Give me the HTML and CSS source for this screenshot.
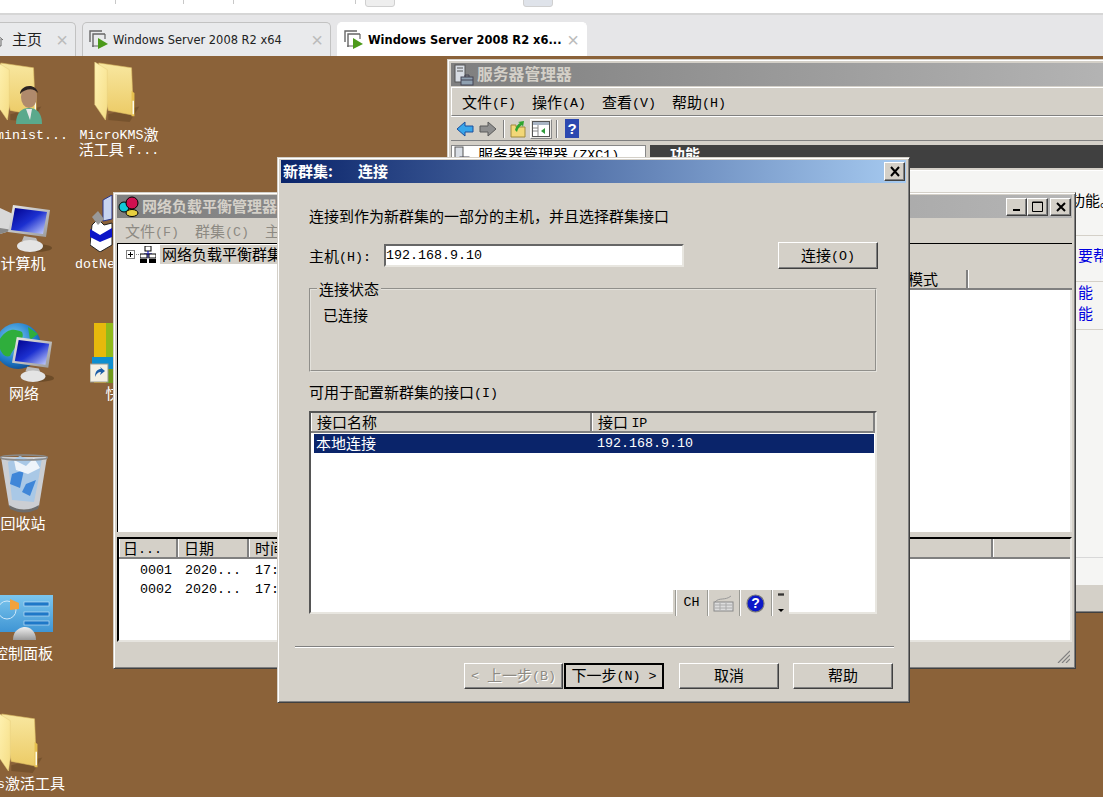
FILE: index.html
```html
<!DOCTYPE html>
<html lang="zh">
<head>
<meta charset="utf-8">
<title>Windows Server 2008 R2 x64</title>
<link rel="stylesheet" href="styles.css">
</head>
<body>
<svg class="defs" aria-hidden="true">
  <defs>
    <linearGradient id="gBack" x1="0" y1="0" x2="0" y2="1"><stop offset="0" stop-color="#f8e7a0"/><stop offset="1" stop-color="#eccb66"/></linearGradient>
    <linearGradient id="gLeaf" x1="0" y1="0" x2="1" y2="1"><stop offset="0" stop-color="#fff3b4"/><stop offset="1" stop-color="#f5dd85"/></linearGradient>
    <linearGradient id="gScreen" x1="0" y1="0" x2="1" y2="1"><stop offset="0" stop-color="#00008c"/><stop offset=".5" stop-color="#1c30d0"/><stop offset="1" stop-color="#cfd8ff"/></linearGradient>
    <linearGradient id="gFrame" x1="0" y1="0" x2="1" y2="1"><stop offset="0" stop-color="#e8e8e8"/><stop offset="1" stop-color="#9a9a9a"/></linearGradient>
    <radialGradient id="gGlobe" cx=".4" cy=".35" r=".7"><stop offset="0" stop-color="#7fd0f5"/><stop offset=".7" stop-color="#1d78c8"/><stop offset="1" stop-color="#0f4a8c"/></radialGradient>
    <linearGradient id="gPanel" x1="0" y1="0" x2="0" y2="1"><stop offset="0" stop-color="#7cc6ee"/><stop offset="1" stop-color="#3f95d4"/></linearGradient>
    <linearGradient id="gDome" x1="0" y1="0" x2="0" y2="1"><stop offset="0" stop-color="#f0f0f0"/><stop offset="1" stop-color="#9a9a9a"/></linearGradient>
    <symbol id="folder" viewBox="0 0 48 62">
      <path d="M14 54 L46 46 L36 62 L14 60z" fill="#5f4222" opacity=".45"/>
      <path d="M4 1 L38 6 L40 55 L14 50z" fill="url(#gBack)" stroke="#d8b860" stroke-width=".6"/>
      <path d="M38 30 L41 32 L41 56 L38 56z" fill="#e6c04f"/>
      <path d="M39 40 L40.5 40 L40.5 54 L39 54z" fill="#fffdf0"/>
      <path d="M0 0 L13 8 L13 46 L11 60 L0 44z" fill="url(#gLeaf)" stroke="#e6cd7c" stroke-width=".5"/>
    </symbol>
    <symbol id="monitor" viewBox="0 0 44 48">
      <ellipse cx="28" cy="43" rx="16" ry="4" fill="#4f3518" opacity=".5"/>
      <path d="M5 0 L42 5 L38 32 L0 27z" fill="url(#gFrame)"/>
      <path d="M7 3 L39 7 L35 29 L3 25z" fill="url(#gScreen)"/>
      <path d="M16 31 L28 33 L30 37 L14 36z" fill="#bdbdbd"/>
      <ellipse cx="22" cy="41" rx="13" ry="6" fill="#e4e4e4"/>
    </symbol>
  </defs>
</svg>

<div class="app">
  <div class="topbar">
    <span class="tb-sep tb-a"></span><span class="tb-sep tb-b"></span><span class="tb-sep tb-c"></span>
    <span class="tb-btn tb-d"></span><span class="tb-sep tb-e"></span><span class="tb-btn tb-f"></span>
  </div>
  <div class="tabbar">
    <div class="tab tab-home">
      <svg class="home-ico" width="10" height="14" viewBox="0 0 10 14"><path d="M-6 7 L1 1 L8 7 M0 6 V13 H6 V6" fill="none" stroke="#666" stroke-width="1"/></svg>
      <span class="tab-title cjk">主页</span><span class="tab-x">×</span>
    </div>
    <div class="tab tab-vm">
      <svg class="vm-ico" width="20" height="20" viewBox="0 0 20 20"><path d="M1 12 V1 H13 M4 17 V4 H16" fill="none" stroke="#666" stroke-width="1.4"/><path d="M3 16 H9 M16 4 V9" fill="none" stroke="#666" stroke-width="1.2"/><path d="M9 8 L19 14 L9 19z" fill="#4c9a1a"/></svg>
      <span class="tab-title">Windows Server 2008 R2 x64</span><span class="tab-x">×</span>
    </div>
    <div class="tab tab-vm active">
      <svg class="vm-ico" width="20" height="20" viewBox="0 0 20 20"><path d="M1 12 V1 H13 M4 17 V4 H16" fill="none" stroke="#666" stroke-width="1.4"/><path d="M3 16 H9 M16 4 V9" fill="none" stroke="#666" stroke-width="1.2"/><path d="M9 8 L19 14 L9 19z" fill="#4c9a1a"/></svg>
      <span class="tab-title">Windows Server 2008 R2 x6...</span><span class="tab-x">×</span>
    </div>
  </div>

  <main class="desktop">
    <!-- desktop icons -->
    <svg class="d-ico i-admin-f" width="48" height="60"><use href="#folder"/></svg>
    <svg class="d-ico i-admin-u" width="30" height="42" viewBox="0 0 30 42"><path d="M2 42 C2 30 8 26 15 26 C22 26 28 30 28 42z" fill="#5aa98c"/><path d="M12 27 L18 27 L16 38z" fill="#e8e8e8"/><ellipse cx="15" cy="15" rx="8" ry="11" fill="#b08a6c"/><path d="M6 12 C6 3 22 0 24 11 C20 6 12 6 6 12z" fill="#2b2320"/></svg>
    <span class="d-label l-admin"><span class="m">Administ...</span></span>
    <svg class="d-ico i-kms" width="48" height="60"><use href="#folder"/></svg>
    <span class="d-label l-kms"><span class="m">MicroKMS</span>激<br>活工具 <span class="m">f...</span></span>

    <svg class="d-ico i-pc-t" width="14" height="30" viewBox="0 0 14 30"><path d="M0 2 L13 8 V24 L0 28z" fill="#d8d8d8"/><path d="M0 22 L13 24 L0 28z" fill="#888"/></svg>
    <svg class="d-ico i-pc" width="44" height="48"><use href="#monitor"/></svg>
    <span class="d-label l-pc">计算机</span>
    <svg class="d-ico i-net" width="24" height="57" viewBox="0 0 24 57"><path d="M2 30 L8 24 L14 30 L22 28 V50 L10 57 L0 50z" fill="#fff" stroke="#222"/><path d="M0 34 L10 40 L22 33 V42 L10 47 L0 42z" fill="#0a14c8"/><path d="M13 5 L22 0 V24 L13 26z" fill="#c8d4f0" stroke="#27358c"/><path d="M2 22 L8 16 L14 24 L8 30z" fill="#999"/></svg>
    <span class="d-label l-net"><span class="m">dotNet...</span></span>

    <svg class="d-ico i-globe" width="44" height="48" viewBox="0 0 44 48"><circle cx="18" cy="24" r="23" fill="url(#gGlobe)"/><path d="M-2 20 C6 6 14 6 22 10 C26 18 14 24 10 34 C4 36 0 30 -2 20z" fill="#2fae3c"/><path d="M28 5 L38 12 L30 18z" fill="#2fae3c"/></svg>
    <svg class="d-ico i-netmon" width="42" height="46"><use href="#monitor"/></svg>
    <span class="d-label l-globe">网络</span>
    <svg class="d-ico i-books" width="24" height="62" viewBox="0 0 24 62"><rect x="4" width="12" height="36" fill="#e6b90c"/><rect x="16" width="8" height="36" fill="#8fba1a"/><rect y="34" x="2" width="22" height="12" fill="#0e8ed0"/><rect y="46" x="4" width="12" height="14" fill="#d6a018"/><rect y="46" x="16" width="8" height="14" fill="#6f9a1a"/><rect x="0" y="41" width="18" height="18" fill="#f4f0e4" stroke="#9a9a90"/><path d="M5 54 C5 48 8 46 11 46 L10 44 L15 48 L10 52 L11 49 C8 49 6 51 5 54z" fill="#1c5ea8"/></svg>
    <span class="d-label l-books">快</span>

    <svg class="d-ico i-bin" width="48" height="60" viewBox="0 0 48 60"><path d="M1 3 L47 3 L39 52 Q24 60 9 52z" fill="#d6e2ee" opacity=".85"/><path d="M8 8 L20 2 L30 6 L42 4 L38 28 L34 48 L12 46z" fill="#a9c8e6"/><path d="M12 20 L24 16 L20 34 L10 30z" fill="#3f86d8"/><path d="M26 30 L36 26 L30 42 L22 38z" fill="#3f86d8"/><path d="M14 6 L26 12 L34 4 L40 14 L28 20 L16 16z" fill="#eef4fa"/><ellipse cx="24" cy="3.500" rx="23.500" ry="2.500" fill="none" stroke="#8a8a8a" stroke-width="1.500"/><path d="M9 51 Q24 60 39 51 L38 55 Q24 62 10 55z" fill="#6c6c6c"/></svg>
    <span class="d-label l-bin">回收站</span>

    <svg class="d-ico i-cp" width="54" height="46" viewBox="0 0 54 46"><rect x="-2" width="55" height="37" fill="url(#gPanel)"/><circle cx="7" cy="15" r="9" fill="none" stroke="#cfe8f8" stroke-width="1"/><path d="M10 4 L19 8 L19 14 L10 15z" fill="#f2a23c"/><rect x="24" y="7" width="25" height="4" fill="#1e78c8" stroke="#cfe8f8" stroke-width=".6"/><rect x="24" y="17" width="25" height="4" fill="#1e78c8" stroke="#cfe8f8" stroke-width=".6"/><rect x="24" y="26" width="25" height="4" fill="#1e78c8" stroke="#cfe8f8" stroke-width=".6"/><path d="M13 45 C13 34 22 32 25 32 C30 32 36 36 36 45z" fill="url(#gDome)"/></svg>
    <span class="d-label l-cp">控制面板</span>

    <svg class="d-ico i-kt" width="48" height="60"><use href="#folder"/></svg>
    <span class="d-label l-kt"><span class="m">Kms</span>激活工具</span>

    <!-- Server Manager window -->
    <section class="win win-server">
      <header class="title title-gray"><svg class="sm-ico" width="20" height="22" viewBox="0 0 20 22"><rect x="1" y="1" width="10" height="17" fill="#d8dde4" stroke="#555"/><path d="M3 4 H9 M3 7 H9" stroke="#555"/><rect x="7" y="13" width="12" height="8" fill="#8fa0b0" stroke="#445"/><path d="M11 13 V11 H15 V13 M7 16 H19" fill="none" stroke="#445"/></svg><span class="title-text title-srv">服务器管理器</span></header>
      <nav class="menu menu-server">
        <span class="mi">文件<span class="m">(F)</span></span><span class="mi">操作<span class="m">(A)</span></span><span class="mi">查看<span class="m">(V)</span></span><span class="mi">帮助<span class="m">(H)</span></span>
      </nav>
      <div class="toolbar">
        <svg width="18" height="16" viewBox="0 0 18 16"><path d="M1 8 L9 1 V5 H17 V11 H9 V15z" fill="#39a6ea" stroke="#1c4f9c"/></svg>
        <svg class="t-fwd" width="18" height="16" viewBox="0 0 18 16"><path d="M17 8 L9 1 V5 H1 V11 H9 V15z" fill="#8f8f8f" stroke="#5a5a5a"/></svg>
        <span class="t-sep"></span>
        <svg class="t-up" width="16" height="18" viewBox="0 0 16 18"><path d="M1 5 H6 V7 H15 V17 H1z" fill="#f2d776" stroke="#a08a3c"/><path d="M5 10 C6 6 8 4 10 3 L8 2 L14 1 L13 7 L12 5 C10 6 8 8 7 12z" fill="#2ea52e"/></svg>
        <span class="t-on"><svg width="18" height="16" viewBox="0 0 18 16"><rect x=".5" y=".5" width="17" height="15" fill="#fff" stroke="#555"/><rect x="1" y="1" width="16" height="3" fill="#a8b4c4"/><path d="M6 4 V15 M1 7 H6 M1 10 H6" stroke="#888"/><path d="M13 7 L9 10 L13 13z" fill="#2e9a3a"/></svg></span>
        <span class="t-sep"></span>
        <svg class="t-help" width="14" height="19" viewBox="0 0 14 19"><rect width="14" height="19" fill="#2c48b0"/><text x="7" y="15" class="t-q">?</text></svg>
      </div>
      <div class="srv-main">
        <div class="srv-tree"><svg width="16" height="18" viewBox="0 0 16 18"><rect x="1" y="1" width="8" height="14" fill="#d8dde4" stroke="#555"/><rect x="6" y="11" width="9" height="6" fill="#8fa0b0" stroke="#445"/></svg><span class="srv-tree-t">服务器管理器 <span class="m">(ZXC1)</span></span></div>
        <div class="srv-right">
          <div class="srv-head">功能</div>
          <div class="srv-body">
            <div class="srv-row r1">功能。</div>
            <div class="srv-row r2 link">要帮助</div>
            <div class="srv-row r3 link"><div>能</div><div>能</div></div>
            <div class="srv-fill"></div>
            <div class="srv-foot"></div>
          </div>
        </div>
      </div>
    </section>

    <!-- NLB manager window -->
    <section class="win win-nlb">
      <header class="title title-nlb">
        <svg class="nlb-ico" width="22" height="22" viewBox="0 0 22 22"><circle cx="6" cy="11" r="5" fill="#12c8d8" stroke="#000"/><circle cx="14" cy="7" r="6" fill="#d01050" stroke="#000"/><ellipse cx="14" cy="17" rx="6" ry="3.500" fill="#e8d040" stroke="#000"/></svg>
        <span class="title-text">网络负载平衡管理器</span>
        <div class="win-btns">
          <button class="wb" aria-label="最小化"><svg width="10" height="10" viewBox="0 0 10 10"><rect x="1" y="7" width="7" height="2"/></svg></button>
          <button class="wb" aria-label="最大化"><svg width="11" height="11" viewBox="0 0 11 11"><path d="M.5 1 H10.500 V10.500 H.5z M.5 1.500 H10.500" fill="none" stroke="#000"/></svg></button>
          <button class="wb wb-x" aria-label="关闭"><svg width="10" height="10" viewBox="0 0 10 10"><path d="M1 1 L9 9 M9 1 L1 9" stroke="#000" stroke-width="2"/></svg></button>
        </div>
      </header>
      <nav class="menu menu-nlb">
        <span class="mi">文件<span class="m">(F)</span></span><span class="mi">群集<span class="m">(C)</span></span><span class="mi">主机<span class="m">(O)</span></span>
      </nav>
      <div class="nlb-top">
        <div class="nlb-tree">
          <div class="tree-row">
            <svg class="tree-exp" width="22" height="9" viewBox="0 0 22 9"><rect x=".5" y=".5" width="8" height="8" fill="#fff" stroke="#808080"/><path d="M2 4.500 H7 M4.500 2 V7" stroke="#000"/><path d="M10 4.500 H20" stroke="#888" stroke-dasharray="1 1"/></svg>
            <svg class="tree-net" width="16" height="17" viewBox="0 0 16 17"><rect x="5" y="0" width="6" height="5" fill="#fff" stroke="#000"/><path d="M8 5 V12 M4 8 H12" stroke="#00c"/><rect x="0" y="8" width="7" height="4" fill="#fff" stroke="#000"/><rect x="9" y="8" width="7" height="4" fill="#fff" stroke="#000"/><rect x="0" y="13" width="7" height="4" fill="#000"/><rect x="9" y="13" width="7" height="4" fill="#000"/></svg>
            <span class="tree-sel">网络负载平衡群集</span>
          </div>
        </div>
        <div class="nlb-right">
          <div class="nlb-band"></div>
          <div class="lv-head nlb-head"><span class="lv-c c-main">模式</span><span class="lv-c c-end"></span></div>
          <div class="nlb-white"></div>
        </div>
      </div>
      <div class="nlb-log">
        <div class="lv-head log-head">
          <span class="lv-c c-a">日<span class="m">...</span></span><span class="lv-c c-b">日期</span><span class="lv-c c-c">时间</span><span class="lv-c c-d"></span><span class="lv-c c-e"></span>
        </div>
        <div class="log-row"><span class="m c-a-t">0001</span><span class="m c-b-t">2020...</span><span class="m">17:</span></div>
        <div class="log-row"><span class="m c-a-t">0002</span><span class="m c-b-t">2020...</span><span class="m">17:</span></div>
      </div>
      <footer class="status"><svg class="grip" width="13" height="13" viewBox="0 0 13 13"><path d="M13 1 L1 13 M13 5 L5 13 M13 9 L9 13" stroke="#808080" stroke-width="1.200"/></svg></footer>
    </section>

    <!-- New cluster dialog -->
    <section class="win win-dlg">
      <header class="title title-blue">
        <span class="title-text dlg-title">新群集:</span><span class="title-text dlg-sub">连接</span>
        <button class="wb wb-close" aria-label="关闭"><svg width="12" height="11" viewBox="0 0 12 11"><path d="M2 1 L10 10 M10 1 L2 10" stroke="#000" stroke-width="2"/></svg></button>
      </header>
      <div class="dlg-body">
        <p class="intro">连接到作为新群集的一部分的主机，并且选择群集接口</p>
        <div class="host-row">
          <label class="host-label">主机<span class="m">(H):</span></label>
          <div class="input"><span class="m">192.168.9.10</span></div>
          <button class="btn btn-conn">连接<span class="m">(O)</span></button>
        </div>
        <fieldset class="group">
          <legend>连接状态</legend>
          <div class="group-text">已连接</div>
        </fieldset>
        <div class="list-label">可用于配置新群集的接口<span class="m">(I)</span></div>
        <div class="iface">
          <div class="lv-head if-head"><span class="lv-c if-a">接口名称</span><span class="lv-c if-b">接口 <span class="m">IP</span></span></div>
          <div class="if-row"><span class="if-name">本地连接</span><span class="m">192.168.9.10</span></div>
        </div>
        <hr class="sep">
        <div class="actions">
          <button class="btn btn-off"><span class="m">&lt; </span>上一步<span class="m">(B)</span></button>
          <button class="btn btn-def">下一步<span class="m">(N) &gt;</span></button>
          <button class="btn btn-cancel">取消</button>
          <button class="btn btn-help">帮助</button>
        </div>
      </div>
      <aside class="langbar">
        <span class="lb-cell lb-ch"><span class="m">CH</span></span>
        <span class="lb-cell lb-kb"><svg width="21" height="17" viewBox="0 0 21 17"><path d="M2 7 C6 2 12 6 18 1" fill="none" stroke="#999"/><rect x="1" y="7" width="19" height="9" fill="#ddd" stroke="#888"/><path d="M2 10 H19 M2 13 H19 M7 8 V15 M13 8 V15" stroke="#aaa"/></svg></span>
        <span class="lb-cell lb-q"><svg width="19" height="19" viewBox="0 0 19 19"><circle cx="9.500" cy="9.500" r="8.500" fill="#0c18c8" stroke="#7a7a7a" stroke-width="1.200"/><text x="9.500" y="14" class="lb-qt">?</text></svg></span>
        <span class="lb-cell lb-more"><svg width="8" height="22" viewBox="0 0 8 22"><path d="M1 2 H7 M1 3 H7" stroke="#000"/><path d="M1 17 L7 17 L4 20z" fill="#000"/></svg></span>
      </aside>
    </section>
  </main>
</div>
</body>
</html>
```
FILE: styles.css
```css
* { box-sizing: border-box; }
html, body { margin: 0; height: 100%; overflow: hidden; }
body { font-family: "Noto Sans CJK SC", "Liberation Sans", sans-serif; font-size: 15px; line-height: 20px; color: #000; }
.defs { width: 0; height: 0; position: absolute; }
.m { font-family: "Liberation Mono", monospace; font-size: 13.33px; line-height: 0; vertical-align: 1px; }
.app { display: flex; flex-direction: column; width: 1103px; height: 797px; }

/* top chrome */
.topbar { position: relative; height: 15px; flex: none; background: #fff; border-bottom: 2px solid #d6d6d6; }
.tb-sep { position: absolute; top: 0; width: 1px; height: 4px; background: #c8c8c8; }
.tb-a { left: 115px; } .tb-b { left: 183px; } .tb-c { left: 233px; } .tb-e { left: 355px; }
.tb-btn { position: absolute; top: -4px; width: 30px; height: 11px; background: #eeeeee; border: 1px solid #d0d0d0; border-radius: 3px; }
.tb-d { left: 365px; } .tb-f { left: 523px; background: #dfe3ea; }
.tabbar { height: 41px; flex: none; display: flex; align-items: flex-end; gap: 6px; padding-left: 0; background: #e6e6e8; margin-left: -6px; width: 1109px; }
.tab { display: flex; align-items: center; height: 34px; background: #e9eaec; border: 1px solid #c2c2c2; border-bottom: 0; border-radius: 5px 5px 0 0; position: relative; padding-left: 6px; font-family: "DejaVu Sans", sans-serif; font-size: 11.45px; color: #222; }
.tab-home { width: 82px; padding-left: 0; }
.tab-vm { width: 249px; }
.tab.active { width: 250px; background: #fff; border-color: #fff; font-weight: 700; color: #000; font-size: 11.45px; margin-left: 0; }
.home-ico { flex: none; margin-right: 7px; }
.vm-ico { flex: none; margin-right: 4px; }
.tab-title { white-space: nowrap; flex: 1; }
.cjk { font-family: "Noto Sans CJK SC", sans-serif; font-size: 15px; margin-top: -1px; }
.tab-x { font-family: "Liberation Sans", sans-serif; font-size: 20px; color: #bbbbbb; font-weight: 400; margin-right: 7px; flex: none; }

/* desktop */
.desktop { position: relative; flex: 1; background: #8b6239; overflow: hidden; }
.d-ico { position: absolute; }
.d-label { position: absolute; width: 110px; text-align: center; color: #fff; font-size: 15px; line-height: 15px; white-space: nowrap; }
.i-admin-f { left: -4px; top: 6px; }
.i-admin-u { left: 14px; top: 26px; }
.l-admin { left: -31px; top: 70px; }
.i-kms { left: 94px; top: 6px; }
.l-kms { left: 64px; top: 70px; }
.i-pc-t { left: 0; top: 150px; }
.i-pc { left: 8px; top: 149px; }
.l-pc { left: -32px; top: 199px; }
.i-net { left: 90px; top: 139px; }
.l-net { left: 56px; top: 199px; }
.i-globe { left: 0; top: 266px; overflow: visible; }
.i-netmon { left: 12px; top: 281px; }
.l-globe { left: -31px; top: 329px; }
.i-books { left: 90px; top: 267px; }
.l-books { left: 58px; top: 329px; }
.i-bin { left: 0; top: 398px; }
.l-bin { left: -32px; top: 459px; }
.i-cp { left: 0; top: 539px; overflow: visible; }
.l-cp { left: -32px; top: 589px; }
.i-kt { left: -3px; top: 657px; }
.l-kt { left: -32px; top: 719px; }

/* windows */
.win { position: absolute; background: #d4d0c8; border: 1px solid; border-color: #d4d0c8 #404040 #404040 #d4d0c8; box-shadow: inset 1px 1px #fff, inset -1px -1px #808080; padding: 2px 3px 3px; display: flex; flex-direction: column; }
.win-server { left: 447px; top: 3px; width: 680px; height: 554px; z-index: 1; padding-top: 3px; }
.win-nlb { left: 113px; top: 136px; width: 963px; height: 477px; z-index: 2; }
.win-dlg { left: 277px; top: 101px; width: 633px; height: 546px; z-index: 3; }
.title { height: 23px; flex: none; display: flex; align-items: center; position: relative; color: #d4d0c8; font-weight: 700; }
.title-text { white-space: nowrap; margin-top: -1px; }
.title-gray { background: linear-gradient(90deg, #7f7f7f, #b5b5b5); }
.title-srv { font-size: 15.8px; }
.sm-ico { margin: 0 3px 0 3px; flex: none; }
.title-nlb { background: linear-gradient(90deg, #7f7f7f, #b5b5b5); }
.nlb-ico { margin: 0 2px 0 1px; flex: none; }
.title-blue { background: linear-gradient(90deg, #0a246a, #a6caf0); color: #fff; }
.dlg-title { margin-left: 2px; width: 75px; }
.win-btns { margin-left: auto; display: flex; margin-right: 1px; height: 18px; }
.wb { width: 21px; height: 18px; padding: 0; background: #d4d0c8; border: 1px solid; border-color: #fff #404040 #404040 #fff; box-shadow: inset -1px -1px #808080; display: flex; align-items: center; justify-content: center; }
.wb-x { margin-left: 2px; }
.wb-close { margin-left: auto; margin-right: 1px; width: 21px; height: 19px; }

/* menus and toolbars */
.menu { display: flex; flex: none; color: #000; white-space: nowrap; }
.menu-server { height: 29px; margin-top: 1px; align-items: center; padding-left: 10px; border-top: 1px solid #fff; border-left: 1px solid #fff; border-bottom: 1px solid #808080; box-shadow: 0 1px #fff; }
.mi { width: 70px; }
.menu-nlb { height: 25px; align-items: center; padding-left: 8px; color: #8d8a83; }
.toolbar { height: 24px; flex: none; display: flex; align-items: center; padding-left: 5px; margin-top: 1px; border-bottom: 1px solid #808080; }
.t-fwd { margin-left: 5px; }
.t-sep { width: 1px; height: 18px; flex: none; background: #808080; box-shadow: 1px 0 #fff; margin: 0 6px; }
.t-on { margin-left: 4px; width: 22px; height: 20px; display: flex; align-items: center; justify-content: center; background: #eceae5; border: 1px solid #fff; border-color: #fff #888 #888 #fff; }
.t-on + .t-sep { margin-left: 4px; }
.t-help { margin-left: 2px; }
.t-q { font-family: "Liberation Sans", sans-serif; font-size: 15px; fill: #fff; text-anchor: middle; font-weight: 700; }

/* server manager panes */
.srv-main { flex: 1; display: flex; margin-top: 4px; gap: 4px; min-height: 0; }
.srv-tree { width: 195px; flex: none; background: #fff; border: 1px solid #888; display: flex; align-items: flex-start; gap: 8px; padding: 0 2px; white-space: nowrap; }
.srv-tree-t { margin-top: -2px; }
.srv-right { flex: 1; display: flex; flex-direction: column; min-width: 0; }
.srv-head { height: 23px; flex: none; background: #404040; color: #fff; font-weight: 700; padding-left: 20px; line-height: 18px; }
.srv-body { flex: 1; display: flex; flex-direction: column; background: #f5f5f3; margin-top: 2px; border-top: 1px solid #fff; white-space: nowrap; }
.srv-row { padding-left: 420px; border-bottom: 1px solid #d4d0c8; flex: none; }
.link { color: #0000e0; padding-left: 428px; }
.r1 { height: 65px; padding-top: 19px; }
.r2 { height: 46px; padding-top: 9px; }
.r3 { height: 48px; padding-top: 0; }
.r3 div { height: 21px; }
.srv-fill { flex: 1; border-bottom: 1px solid #d8d8d8; }
.srv-foot { flex: none; background: #d4d0c8; border-top: 27px solid #f5f5f3; height: 51px; }

/* NLB panes */
.nlb-top { height: 289px; flex: none; display: flex; gap: 4px; }
.nlb-tree { width: 430px; flex: none; background: #fff; border-top: 1px solid #000; border-left: 1px solid #000; }
.tree-row { display: flex; align-items: center; height: 19px; margin-top: 1px; padding-left: 8px; }
.tree-exp { flex: none; }
.tree-net { flex: none; margin-left: -8px; margin-right: 4px; }
.tree-sel { background: #d4d0c8; white-space: nowrap; padding: 0 2px; line-height: 18px; height: 19px; }
.nlb-right { flex: 1; min-width: 0; display: flex; flex-direction: column; border-top: 1px solid #000; }
.nlb-band { height: 26px; flex: none; }
.lv-head { display: flex; flex: none; height: 20px; }
.lv-c { display: block; height: 100%; flex: none; background: #d4d0c8; border-right: 2px solid #808080; border-bottom: 2px solid #808080; box-shadow: inset 1px 0 #fff; white-space: nowrap; line-height: 18px; padding-left: 6px; overflow: hidden; }
.c-main { width: 417px; padding-left: 357px; }
.c-end { flex: 1; border-right: 0; }
.nlb-white { flex: 1; background: #fff; border-right: 2px solid #e6e4df; }
.nlb-log { margin-top: 5px; height: 105px; flex: none; background: #fff; border-top: 2px solid #000; border-left: 2px solid #000; border-right: 2px solid #e6e4df; border-bottom: 2px solid #e6e4df; }
.log-head { margin-bottom: 2px; }
.c-a { width: 59px; padding-left: 4px; }
.c-b { width: 71px; }
.c-c { width: 70px; }
.c-d { width: 674px; }
.c-e { flex: 1; border-right: 0; }
.log-row { display: flex; height: 19px; }
.log-row .m { line-height: 19px; }
.c-a-t { width: 66px; padding-left: 21px; }
.c-b-t { width: 70px; }
.status { height: 23px; flex: none; display: flex; justify-content: flex-end; align-items: flex-end; padding-right: 2px; padding-bottom: 2px; }

/* dialog */
.dlg-body { flex: 1; display: flex; flex-direction: column; padding: 0 28px; position: relative; }
.intro { margin: 23px 0 0; height: 20px; white-space: nowrap; }
.host-row { margin-top: 16px; height: 27px; display: flex; align-items: center; }
.host-label { width: 75px; flex: none; white-space: nowrap; }
.input { width: 300px; height: 23px; background: #fff; border: 2px solid; border-color: #666 #e8e6e0 #e8e6e0 #666; padding-left: 0; line-height: 16px; }
.btn { font: inherit; height: 26px; padding: 0 0 2px; background: #d4d0c8; color: #000; border: 1px solid; border-color: #fff #404040 #404040 #fff; box-shadow: inset -1px -1px #808080; white-space: nowrap; }
.btn-conn { margin-left: auto; width: 100px; height: 27px; }
.group { margin: 10px 1px 0 0; padding: 0 0 0 12px; height: 93px; border: 2px groove #e4e2dc; min-width: 0; }
.group legend { margin-left: -6px; padding: 0 2px; line-height: 20px; }
.group-text { margin-top: 6px; }
.list-label { margin-top: 10px; height: 20px; white-space: nowrap; }
.iface { margin: 9px 1px 0 0; height: 203px; background: #fff; border: 2px solid; border-color: #555 #e8e6e0 #e8e6e0 #555; }
.if-a { width: 281px; }
.if-b { flex: 1; }
.if-row { display: flex; margin: 1px 1px 0 3px; height: 19px; line-height: 17px; background: #0a246a; color: #fff; padding-left: 2px; }
.if-name { width: 281px; flex: none; }
.if-row .m { line-height: 19px; }
.sep { margin: 32px 0 0 -14px; width: 599px; height: 2px; border: 0; border-top: 1px solid #808080; border-bottom: 1px solid #fff; flex: none; }
.actions { margin-top: 15px; margin-right: -15px; display: flex; justify-content: flex-end; }
.btn-off { width: 99px; color: #8d8a83; text-shadow: 1px 1px #fff; }
.btn-def { width: 100px; margin-left: 1px; border: 2px solid #000; box-shadow: none; }
.btn-cancel { width: 100px; margin-left: 15px; }
.btn-help { width: 100px; margin-left: 14px; }

/* language bar */
.langbar { position: absolute; left: 395px; top: 432px; width: 116px; height: 26px; background: #d4d0c8; display: flex; z-index: 4; }
.lb-cell { display: flex; align-items: center; justify-content: center; height: 100%; border-left: 1px solid #9a9a94; box-shadow: inset 1px 0 #fff; flex: none; }
.lb-ch { width: 32px; margin-left: 2px; }
.lb-kb { width: 32px; }
.lb-q { width: 32px; }
.lb-more { flex: 1; }
.lb-qt { font-family: "Liberation Sans", sans-serif; font-size: 14px; font-weight: 700; fill: #fff; text-anchor: middle; }
```
